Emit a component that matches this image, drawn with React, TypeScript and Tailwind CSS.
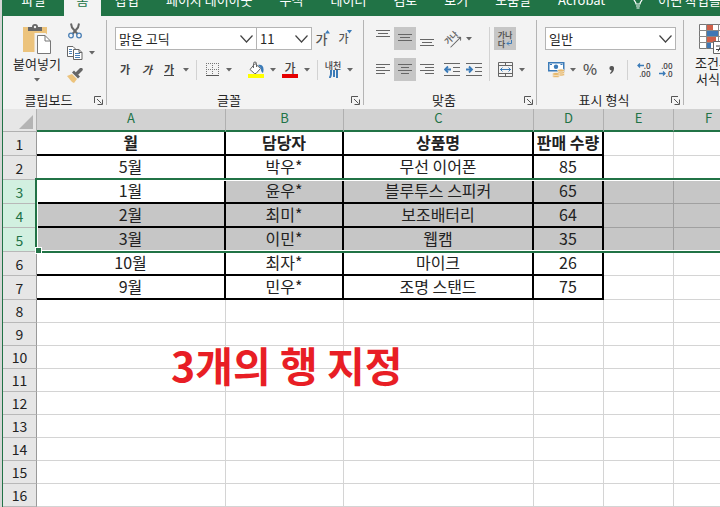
import type { ReactNode } from 'react';
import clsx from 'clsx';

const TABS = ['삽입', '페이지 레이아웃', '수식', '데이터', '검토', '보기', '도움말', 'Acrobat'];

const COLUMNS = [
  { name: 'A', width: 'w-[189px]' },
  { name: 'B', width: 'w-[118px]' },
  { name: 'C', width: 'w-[190px]' },
  { name: 'D', width: 'w-[70px]' },
  { name: 'E', width: 'w-[70px]' },
  { name: 'F', width: 'w-[70px]' },
];

const DATA = [
  ['월', '담당자', '상품명', '판매 수량'],
  ['5월', '박우*', '무선 이어폰', '85'],
  ['1월', '윤우*', '블루투스 스피커', '65'],
  ['2월', '최미*', '보조배터리', '64'],
  ['3월', '이민*', '웹캠', '35'],
  ['10월', '최자*', '마이크', '26'],
  ['9월', '민우*', '조명 스탠드', '75'],
];

const ROW_COUNT = 16;
const SELECTED = [3, 4, 5];

function Caret() {
  return (
    <svg width="6" height="4" viewBox="0 0 6 4" fill="#666" aria-hidden="true">
      <path d="M0 0h6L3 3.5z" />
    </svg>
  );
}

function CaretButton({ label }: { label: string }) {
  return (
    <button aria-label={label} className="flex h-full w-3 shrink-0 items-center justify-center">
      <Caret />
    </button>
  );
}

function IconButton({ label, active, children }: { label: string; active?: boolean; children: ReactNode }) {
  return (
    <button
      aria-label={label}
      className={clsx('flex h-full w-[22px] shrink-0 items-center justify-center', active && 'bg-[#c6c6c6]')}
    >
      {children}
    </button>
  );
}

function Divider() {
  return <div className="mx-1 h-5 w-px shrink-0 bg-[#d2d2d2]" />;
}

function Group({ label, className, children }: { label: string; className: string; children: ReactNode }) {
  return (
    <section
      aria-label={label}
      className={clsx('flex h-[85px] shrink-0 flex-col justify-between border-r border-[#b4b4b4]', className)}
    >
      {children}
      <div className="flex h-2.5 items-center pr-[3px]">
        <span className="flex-1 text-center leading-[10px]">{label}</span>
        <button aria-label={`${label} 설정`}>
          <svg width="9" height="9" viewBox="0 0 9 9" fill="none" stroke="#555">
            <path d="M.5 7V.5H7M3 3l4.5 4.5M8.5 3.5v5h-5" />
          </svg>
        </button>
      </div>
    </section>
  );
}

function Combo({ label, value, className }: { label: string; value: string; className: string }) {
  return (
    <div className={clsx('grid h-[23px] shrink-0 items-center', className)}>
      <select
        aria-label={label}
        defaultValue={value}
        className="col-start-1 row-start-1 h-full w-full appearance-none border border-[#b4b4b4] bg-white pl-[3px] leading-5 outline-none"
      >
        <option>{value}</option>
      </select>
      <svg
        className="pointer-events-none col-start-1 row-start-1 mr-1 justify-self-end"
        width="13"
        height="8"
        viewBox="0 0 13 8"
        fill="none"
        stroke="#444"
        strokeWidth="1.2"
      >
        <path d="M.5.5l6 6.5 6-6.5" />
      </svg>
    </div>
  );
}

function Lines({ d }: { d: string }) {
  return (
    <svg width="14" height="17" viewBox="0 0 14 17" stroke="#666" fill="none">
      <path d={d} />
    </svg>
  );
}

function ClipboardGroup() {
  return (
    <Group label="클립보드" className="w-[104px]">
      <div className="flex pl-[9px]">
        <button className="flex w-[50px] flex-col items-center pt-1">
          <svg width="28" height="30" viewBox="0 0 28 30">
            <path d="M0 3h24v25H0z" fill="#ecc37c" />
            <path d="M5 7V3h4a3 3 0 0 1 6 0h4v4z" fill="#666" />
            <circle cx="12" cy="3" r="1.2" fill="#f3f3f3" />
            <path d="M13 10.5h9l5.5 5.5v13.500H13z" fill="#fff" stroke="#f3f3f3" strokeWidth="3" />
            <path d="M14.500 11.500h7.500l5.500 5.500v12.500h-13z" fill="#fff" stroke="#777" />
            <path d="M22 11.500V17h5.500" fill="none" stroke="#777" />
          </svg>
          <span className="mt-0.5 leading-4">붙여넣기</span>
          <span className="mt-1 flex h-2 items-center">
            <Caret />
          </span>
        </button>
        <div className="flex flex-col pl-0.5">
          <div className="flex h-[22px]">
            <IconButton label="잘라내기">
              <svg width="14" height="16" viewBox="0 0 14 16" fill="none">
                <path d="M3 .5l1 4 5.500 6.500M11 .5l-1 4L4.500 11" stroke="#666" strokeWidth="2" />
                <circle cx="3" cy="12.500" r="2.300" stroke="#4a7fb5" strokeWidth="1.300" />
                <circle cx="11" cy="12.500" r="2.300" stroke="#4a7fb5" strokeWidth="1.300" />
              </svg>
            </IconButton>
          </div>
          <div className="flex h-[22px]">
            <IconButton label="복사">
              <svg width="16" height="14" viewBox="0 0 16 14" fill="#fff" stroke="#666">
                <path d="M.5.500h5.500l2.500 2.500v7.500h-8z" />
                <path d="M6.500 3.500h5.500l3 3v7H6.500z" />
                <path d="M12 3.500v3h3" fill="none" />
                <path d="M2 3.500h3M2 5.500h3M2 7.500h3M8 7.500h5M8 9.500h5M8 11.500h5" stroke="#4a7fb5" />
              </svg>
            </IconButton>
            <CaretButton label="복사 옵션" />
          </div>
          <div className="flex h-[22px]">
            <IconButton label="서식 복사">
              <svg width="16" height="15" viewBox="0 0 16 15">
                <path d="M0 8l5-2 5 5-3 4-2-1z" fill="#ecc37c" />
                <path d="M5 4.500l2-2 6 6-2 2z" fill="#666" />
                <path d="M10.500 5l3.500-3.500" stroke="#666" strokeWidth="3.500" strokeLinecap="round" />
              </svg>
            </IconButton>
          </div>
        </div>
      </div>
    </Group>
  );
}

function FontGroup() {
  return (
    <Group label="글꼴" className="w-[257px]">
      <div className="flex flex-col gap-2 pt-[7px]">
        <div className="flex h-[23px] pl-2">
          <Combo label="글꼴 이름" value="맑은 고딕" className="w-[142px]" />
          <Combo label="글꼴 크기" value="11" className="-ml-px w-14" />
          <IconButton label="글꼴 크게">
            <span className="text-[13px] font-medium text-[#555]">가</span>
            <svg className="-ml-0.5 mb-3.5" width="5" height="4" viewBox="0 0 5 4" fill="#3b7bb8">
              <path d="M0 3.500h5L2.500 0z" />
            </svg>
          </IconButton>
          <IconButton label="글꼴 작게">
            <span className="text-[11px] font-medium text-[#555]">가</span>
            <svg className="-ml-0.5 mb-3.5" width="5" height="4" viewBox="0 0 5 4" fill="#3b7bb8">
              <path d="M0 0h5L2.500 3.500z" />
            </svg>
          </IconButton>
        </div>
        <div className="flex h-[23px] items-center pl-[7px] text-[11px] text-[#444]">
          <IconButton label="굵게">
            <b>가</b>
          </IconButton>
          <IconButton label="기울임꼴">
            <b className="italic">가</b>
          </IconButton>
          <IconButton label="밑줄">
            <b className="border-b border-[#444] leading-3">가</b>
          </IconButton>
          <CaretButton label="밑줄 옵션" />
          <Divider />
          <IconButton label="테두리">
            <svg width="13" height="13" viewBox="0 0 13 13" stroke="#777" fill="none">
              <path d="M0 .5h13M0 6.500h13M.5 0v13M6.500 0v13M12.500 0v13" strokeDasharray="1 1" />
              <path d="M0 12.500h13" stroke="#555" />
            </svg>
          </IconButton>
          <CaretButton label="테두리 옵션" />
          <div className="w-2.5" />
          <IconButton label="채우기 색">
            <svg width="16" height="17" viewBox="0 0 16 17">
              <path d="M7 2.500l5.500 5L8 12.500H6.500L2 8.500z" fill="#fff" stroke="#666" />
              <path d="M5.500 7V2.500a1.500 1.500 0 0 1 3 0V6" fill="none" stroke="#666" />
              <path d="M10 4c5-1 6.500 3 5 8-1-1-2.500-2-2-4.500z" fill="#3b7bb8" />
              <path d="M0 13h16v4H0z" fill="#ff0" />
            </svg>
          </IconButton>
          <CaretButton label="채우기 색 옵션" />
          <IconButton label="글꼴 색">
            <span className="flex w-4 flex-col items-center border-b-4 border-[#e60000] text-xs leading-[13px] font-medium">
              가
            </span>
          </IconButton>
          <CaretButton label="글꼴 색 옵션" />
          <Divider />
          <IconButton label="윗주">
            <span className="flex flex-col items-center text-[9px] leading-[9px] font-medium">
              내천
              <svg width="9" height="8" viewBox="0 0 9 8" fill="none" stroke="#3b7bb8" strokeWidth="2">
                <path d="M2 0v4q0 2-1.500 4M5 0v7M8 0v8" />
              </svg>
            </span>
          </IconButton>
          <CaretButton label="윗주 옵션" />
        </div>
      </div>
    </Group>
  );
}

function AlignGroup() {
  return (
    <Group label="맞춤" className="w-[173px]">
      <div className="flex pt-[7px] pl-2">
        <div className="flex flex-col gap-2">
          <div className="flex h-[23px]">
            <IconButton label="위쪽 맞춤">
              <Lines d="M0 .5h14M2 3.500h10M0 6.500h14" />
            </IconButton>
            <IconButton label="가운데 맞춤" active>
              <Lines d="M0 4.500h14M2 7.500h10M0 10.500h14" />
            </IconButton>
            <IconButton label="아래쪽 맞춤">
              <Lines d="M0 9.500h14M2 12.500h10M0 15.500h14" />
            </IconButton>
            <div className="w-[3px]" />
            <IconButton label="방향">
              <span className="flex -rotate-45 flex-col items-center text-[8px] leading-[9px] font-bold text-[#666]">
                가나
                <svg width="15" height="5" viewBox="0 0 15 5" fill="none" stroke="#666">
                  <path d="M0 2.500h14M12 0l2.500 2.500L12 5" />
                </svg>
              </span>
            </IconButton>
            <CaretButton label="방향 옵션" />
          </div>
          <div className="flex h-[23px]">
            <IconButton label="왼쪽 맞춤">
              <Lines d="M0 3.500h14M0 6.500h9M0 9.500h14M0 12.500h9" />
            </IconButton>
            <IconButton label="가로 가운데 맞춤" active>
              <Lines d="M0 3.500h14M3 6.500h8M0 9.500h14M3 12.500h8" />
            </IconButton>
            <IconButton label="오른쪽 맞춤">
              <Lines d="M0 3.500h14M5 6.500h9M0 9.500h14M5 12.500h9" />
            </IconButton>
            <div className="w-[3px]" />
            <IconButton label="내어쓰기">
              <svg width="16" height="13" viewBox="0 0 16 13" fill="none" stroke="#666">
                <path d="M0 .5h16M9 4.500h7M9 8.500h7M0 12.500h16" />
                <path d="M7 6.500H1M4 3.500l-3 3 3 3" stroke="#3b7bb8" strokeWidth="1.800" />
              </svg>
            </IconButton>
            <IconButton label="들여쓰기">
              <svg width="16" height="13" viewBox="0 0 16 13" fill="none" stroke="#666">
                <path d="M0 .5h16M9 4.500h7M9 8.500h7M0 12.500h16" />
                <path d="M0 6.500h6M3 3.500l3 3-3 3" stroke="#3b7bb8" strokeWidth="1.800" />
              </svg>
            </IconButton>
          </div>
        </div>
        <div className="mx-1 w-px bg-[#d2d2d2]" />
        <div className="flex flex-col gap-2">
          <div className="flex h-[23px]">
            <IconButton label="자동 줄 바꿈" active>
              <span className="text-[8px] leading-[9px] font-bold text-[#555]">
                가나
                <span className="flex items-center">
                  다
                  <svg width="7" height="6" viewBox="0 0 7 6" fill="none" stroke="#3b7bb8">
                    <path d="M6.500 0v3.500H2M4 1.500l-2 2 2 2" />
                  </svg>
                </span>
              </span>
            </IconButton>
          </div>
          <div className="flex h-[23px]">
            <IconButton label="병합하고 가운데 맞춤">
              <svg width="15" height="15" viewBox="0 0 15 15" fill="none" stroke="#666">
                <path d="M.5.500h14v14H.5zM.5 3.500h14M.5 11.500h14M7.500.5v3M7.500 11.500v3" />
                <path d="M2 7.500h11M4.500 5.500l-2 2 2 2M10.500 5.500l2 2-2 2" stroke="#3b7bb8" />
              </svg>
            </IconButton>
            <CaretButton label="병합 옵션" />
          </div>
        </div>
      </div>
    </Group>
  );
}

function DecimalIcon({ less }: { less?: boolean }) {
  return (
    <span className="flex w-[15px] flex-col text-right font-['Open_Sans',sans-serif] text-[8px] leading-[8px] font-semibold text-[#444]">
      <span className="flex items-center justify-end">
        {!less && (
          <svg width="7" height="5" viewBox="0 0 7 5" fill="none" stroke="#3b7bb8" strokeWidth="1.300">
            <path d="M7 2.500H1M3 .5l-2 2 2 2" />
          </svg>
        )}
        {less ? '.00' : '.0'}
      </span>
      <span className="flex items-center justify-end">
        {less && (
          <svg width="7" height="5" viewBox="0 0 7 5" fill="none" stroke="#3b7bb8" strokeWidth="1.300">
            <path d="M0 2.500h6M4 .5l2 2-2 2" />
          </svg>
        )}
        {less ? '.0' : '.00'}
      </span>
    </span>
  );
}

function NumberGroup() {
  return (
    <Group label="표시 형식" className="w-[147px]">
      <div className="flex flex-col gap-2 pt-[7px] pl-2">
        <Combo label="표시 형식 선택" value="일반" className="w-[131px]" />
        <div className="flex h-[23px] items-center">
          <IconButton label="회계 표시 형식">
            <svg width="17" height="16" viewBox="0 0 17 16">
              <path d="M.75.750h15v8h-15z" fill="#fff" stroke="#3b7bb8" strokeWidth="1.500" />
              <circle cx="8" cy="4.750" r="2.200" fill="#3b7bb8" />
              <path d="M2 2h2v1H2zM12.500 2h2v1h-2z" fill="#3b7bb8" />
              <g fill="#e8b96c" stroke="#f3f3f3" strokeWidth=".6">
                <ellipse cx="13" cy="12.500" rx="3.500" ry="1.600" />
                <ellipse cx="13" cy="10.500" rx="3.500" ry="1.600" />
                <ellipse cx="13" cy="8.500" rx="3.500" ry="1.600" />
                <ellipse cx="8" cy="14" rx="3.500" ry="1.600" />
                <ellipse cx="8" cy="12" rx="3.500" ry="1.600" />
              </g>
            </svg>
          </IconButton>
          <CaretButton label="회계 옵션" />
          <IconButton label="백분율 스타일">
            <span className="text-[15px] font-medium text-[#555]">%</span>
          </IconButton>
          <IconButton label="쉼표 스타일">
            <svg width="6" height="8" viewBox="0 0 6 8" fill="#555">
              <path d="M2.500 0a2.200 2.200 0 0 1 2.500 2.500C5 5 3.500 7 1.500 8L1 7c1-.8 1.600-1.600 1.700-2.500A2.200 2.200 0 0 1 2.500 0z" />
            </svg>
          </IconButton>
          <Divider />
          <IconButton label="자릿수 늘림">
            <DecimalIcon />
          </IconButton>
          <IconButton label="자릿수 줄임">
            <DecimalIcon less />
          </IconButton>
        </div>
      </div>
    </Group>
  );
}

function ConditionalFormat() {
  return (
    <button className="ml-[11px] flex shrink-0 flex-col items-center pt-1 leading-4">
      <svg width="28" height="31" viewBox="0 0 28 31">
        <path d="M.5.500h24v24H.5z" fill="#fff" stroke="#777" />
        <path d="M8 1h6v5H8zM8 13h9v5H8z" fill="#d0604a" />
        <path d="M8 7h11v5H8zM8 19h4v5H8z" fill="#3f78b5" />
        <path d="M7.500 0v25M19.500 0v25M0 6.500h25M0 12.500h25M0 18.500h25" stroke="#888" fill="none" />
        <path d="M14.500 17.500h13v12h-13z" fill="#fff" stroke="#666" />
        <path d="M17 22h8M17 25.500h8M23 19.500l-4 8" stroke="#444" fill="none" />
      </svg>
      <span>조건부</span>
      <span className="flex items-center gap-1">
        서식 <Caret />
      </span>
    </button>
  );
}

function Ribbon() {
  return (
    <div className="flex overflow-hidden bg-[#f3f3f3] py-1 text-[13px] text-[#262626]">
      <ClipboardGroup />
      <FontGroup />
      <AlignGroup />
      <NumberGroup />
      <ConditionalFormat />
    </div>
  );
}

function TabBar() {
  return (
    <nav className="flex h-4 items-end overflow-hidden bg-[#217346] text-[13px] whitespace-nowrap text-white">
      <button className="h-8 w-[61px] shrink-0">파일</button>
      <button className="h-8 w-[37px] shrink-0 bg-[#f3f3f3] text-[#217346]">홈</button>
      <div className="flex gap-[27px] pl-3.5">
        {TABS.map((tab) => (
          <button key={tab} className="h-8 shrink-0">
            {tab}
          </button>
        ))}
        <button className="flex h-8 shrink-0 items-center gap-3.5">
          <svg width="12" height="18" viewBox="0 0 12 18" fill="none" stroke="#fff" strokeWidth="1.200">
            <path d="M4 13c0-3-3-3.500-3-7a5 5 0 0 1 10 0c0 3.500-3 4-3 7zM4 15h4M4.500 17h3" />
          </svg>
          어떤 작업을
        </button>
      </div>
    </nav>
  );
}

function Sheet() {
  return (
    <main className="relative overflow-hidden">
      <table className="w-full min-w-[741px] table-fixed border-separate border-spacing-0 text-center text-[#222]">
        <thead>
          <tr className="h-[23px] text-[13px] leading-4 text-[#217346]">
            <th className="w-[34px] border-r border-b border-[#b0b0b0] bg-[#e6e6e6] p-0">
              <svg className="mt-1 mr-[3px] ml-auto" width="14" height="14" viewBox="0 0 14 14" fill="#b4b4b4">
                <path d="M14 0v14H0z" />
              </svg>
            </th>
            {COLUMNS.map((col) => (
              <th
                key={col.name}
                scope="col"
                className={clsx(
                  'border-r border-b-2 border-r-[#b0b0b0] border-b-[#217346] bg-[#d2d2d2] p-0 pb-1 font-normal',
                  col.width,
                )}
              >
                {col.name}
              </th>
            ))}
          </tr>
        </thead>
        <tbody>
          {Array.from({ length: ROW_COUNT }, (_, i) => {
            const row = i + 1;
            const cells = DATA[i];
            const selected = SELECTED.includes(row);
            return (
              <tr key={row} className={cells ? 'h-6' : 'h-[23px]'}>
                <th
                  scope="row"
                  className={clsx(
                    'border-r border-b border-r-[#999] border-b-[#b8b8b8] p-0 text-sm leading-5 font-normal',
                    selected ? 'bg-[#d2f0e0] text-[#217346]' : 'bg-[#e6e6e6]',
                  )}
                >
                  {row}
                </th>
                {COLUMNS.map((col, c) => (
                  <td
                    key={col.name}
                    className={clsx(
                      'p-0 pb-0.5 text-base leading-5 whitespace-nowrap',
                      cells && c < 4 ? 'border-r-2 border-b-2 border-black' : 'border-r border-b',
                      !(cells && c < 4) && (selected ? 'border-[#a0a0a0]' : 'border-[#d4d4d4]'),
                      selected && !(row === SELECTED[0] && c === 0) && 'bg-[#c6c6c6]',
                      row === 1 && 'font-bold',
                    )}
                  >
                    {cells?.[c]}
                  </td>
                ))}
              </tr>
            );
          })}
        </tbody>
      </table>

      {/* selection frame over rows 3-5 */}
      <div className="pointer-events-none absolute top-[69px] right-0 left-8 h-[75px] border-y-2 border-l-2 border-[#217346]">
        <div className="h-full border-y border-l border-white" />
        <div className="absolute -bottom-0.5 -left-px size-[5px] bg-[#217346] outline-1 outline-white" />
      </div>

      <p className="absolute top-[231px] left-[168px] text-[41px] leading-[48px] font-bold whitespace-nowrap text-[#e81e25]">
        3개의 행 지정
      </p>
    </main>
  );
}

export default function App() {
  return (
    <div className="min-h-screen overflow-hidden border-l-2 border-[#d6d6d6] bg-white font-['Noto_Sans_CJK_KR',sans-serif]">
      <div className="min-h-screen border-l border-[#217346]">
        <TabBar />
        <Ribbon />
        <Sheet />
      </div>
    </div>
  );
}
